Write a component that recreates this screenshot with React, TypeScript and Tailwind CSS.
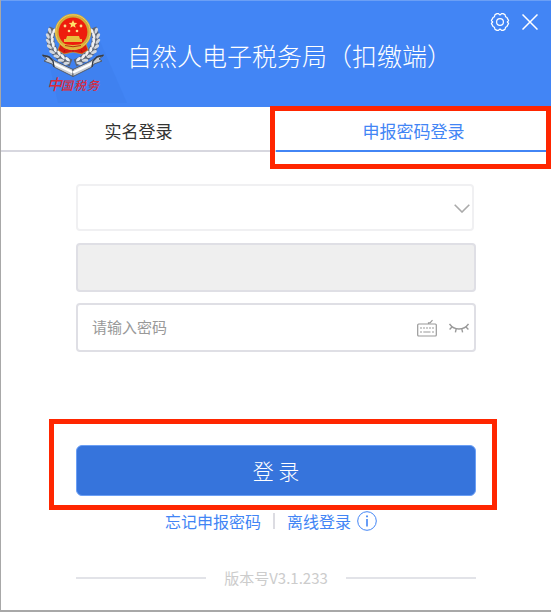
import React, { useState } from 'react';

const leaves = [
  [52, 29, 5], [50, 34, -4], [50, 39, -14], [51, 44, -26], [53, 49, -38], [57, 53, -50], [61, 57, -62], [66, 60, -74],
];

function Emblem() {
  return (
    <svg viewBox="40 8 88 96" className="h-24 w-[88px] shrink-0" role="img" aria-label="中国税务">
      <path d="M50 66 L58 102 L127 102 L99 38 Z" fill="#3f81f0" />
      {/* wreath, drawn once and mirrored */}
      {[false, true].map(flip => (
        <g key={String(flip)} transform={flip ? 'translate(146 0) scale(-1 1)' : undefined}>
          <path d="M53 27 C47 40 51 54 71 62" fill="none" stroke="#5b6576" strokeWidth="7.5" />
          {leaves.map(([x, y, r]) => (
            <g key={y} transform={`translate(${x} ${y}) rotate(${r})`}>
              <ellipse cx="-2.2" cy="0" rx="1.6" ry="3.2" fill="#d3d7dd" transform="rotate(-28)" />
              <ellipse cx="2.2" cy="0" rx="1.5" ry="3" fill="#f0f1f4" transform="rotate(28)" />
              <path d="M0 -2 V3" stroke="#5f6671" strokeWidth="0.8" />
            </g>
          ))}
          <path d="M42 54 L48 55 L55 60 L73 68.5 V75.5 L54 66 L52 63 L44 60 L47 58 Z" fill="#c9ced5" stroke="#4d535e" strokeWidth="0.9" />
          <path d="M53 62 L73 71.5" stroke="#ffffff" strokeWidth="2" />
          <path d="M43 54.5 L49 56 L53 60 L54 66" fill="none" stroke="#343b48" strokeWidth="1.4" />
        </g>
      ))}
      <path d="M60 43 H86 L88 49 L82 53 L73 51 L64 53 L58 49 Z" fill="#d91c12" stroke="#c9992a" strokeWidth="0.8" />
      <circle cx="73" cy="31" r="16.3" fill="#ee1c0d" stroke="#d4aa38" strokeWidth="3.8" />
      <circle cx="73" cy="31" r="17.2" fill="none" stroke="#edcf68" strokeWidth="0.9" />
      <path d="M73 19 l1.2 2.8 3 .2 -2.3 1.9 .8 2.9 -2.7 -1.6 -2.7 1.6 .8 -2.9 -2.3 -1.9 3 -.2 Z" fill="#ffe36a" />
      <g fill="#ffdc8a">
        <circle cx="65" cy="25" r="1.4" />
        <circle cx="81" cy="25" r="1.4" />
        <circle cx="69" cy="30" r="1.3" />
        <circle cx="77" cy="30" r="1.3" />
      </g>
      <path d="M67 35 H79 L80 38 H82 V41 H64 V38 H66 Z" fill="#e8bd3d" />
      <path d="M61 42 Q73 46 85 42 L82 47 Q73 50 64 47 Z" fill="#e2b43a" />
      <path d="M65 44.5 Q73 47 81 44.5" fill="none" stroke="#b52f12" strokeWidth="1" />
      <path d="M65 49 L64 51 M81 49 L82 51 M73 49 V51" stroke="#a51710" strokeWidth="1" />
      <text y="89" fill="#d92a3c" fontFamily="'Noto Sans CJK SC', sans-serif" fontStyle="italic" fontWeight="500">
        <tspan x="47" fontSize="15">中</tspan>
        <tspan x="61" fontSize="12">国</tspan>
        <tspan x="74" fontSize="12">税</tspan>
        <tspan x="87" fontSize="12">务</tspan>
      </text>
    </svg>
  );
}

function SettingsIcon() {
  return (
    <svg viewBox="0 0 20 20" className="size-5" fill="none" stroke="currentColor" strokeWidth="1.2" strokeLinejoin="round">
      <path d="M7 1.6 H8.2 L10 2.9 L11.8 1.6 H13 L15 2.6 L15.6 4.8 L17 5.6 L18.6 8.6 L17.3 10 L18.6 11.4 L17 14.4 L15.6 15.2 L15 17.4 L13 18.4 H11.8 L10 17.1 L8.2 18.4 H7 L5 17.4 L4.4 15.2 L3 14.4 L1.4 11.4 L2.7 10 L1.4 8.6 L3 5.6 L4.4 4.8 L5 2.6 Z" />
      <circle cx="10" cy="10" r="3.4" />
    </svg>
  );
}

function CloseIcon() {
  return (
    <svg viewBox="0 0 16 16" className="size-4" fill="none" stroke="currentColor" strokeWidth="1.5">
      <path d="M0.5 0.5 L15.5 15.5 M15.5 0.5 L0.5 15.5" />
    </svg>
  );
}

function KeyboardIcon() {
  return (
    <svg viewBox="0 0 20 18" className="h-[18px] w-5" fill="none" stroke="currentColor" strokeWidth="1.2">
      <rect x="0.7" y="5" width="18.6" height="12" rx="1" />
      <path d="M11.5 5 V3.8 H13 L15.5 1.2" />
      <path d="M3 9 H17" strokeDasharray="2 1" />
      <path d="M3 13 H5 M6.3 13 H13.5 M15 13 H17" />
    </svg>
  );
}

function ClosedEyeIcon() {
  return (
    <svg viewBox="0 0 20 10" className="h-2.5 w-5" fill="none" stroke="currentColor" strokeWidth="1.4">
      <path d="M0.5 1 Q4 6 10 6 Q16 6 19.5 1" />
      <path d="M3.2 3.8 L0.6 6.4 M7.2 5.8 L6.4 9.4 M12.8 5.8 L13.6 9.4 M16.8 3.8 L19.4 6.4" />
    </svg>
  );
}

export default function App() {
  const [tab, setTab] = useState('password');
  const [password, setPassword] = useState('');
  const [showPassword, setShowPassword] = useState(false);

  const tabClass = (name: string) =>
    tab === name ? 'border-[#4285f5] text-[#4285f5]' : 'border-[#d7d7df] text-[#333333]';

  return (
    <main className="flex min-h-screen flex-col border-b-2 border-l border-[#a8a8a8] bg-white font-['Noto_Sans_CJK_SC',sans-serif]">
      <header className="flex h-[107px] items-start border-t border-[#6b9ff5] bg-[#4285f5] pl-[39px] text-white">
        <div className="flex pt-2">
          <Emblem />
        </div>
        <h1 className="-ml-px flex-1 pt-9 text-[25px] leading-9 font-light whitespace-nowrap">自然人电子税务局（扣缴端）</h1>
        <div className="flex items-center gap-3 pt-[11px] pr-[13px]">
          <button type="button" aria-label="设置"><SettingsIcon /></button>
          <button type="button" aria-label="关闭"><CloseIcon /></button>
        </div>
      </header>

      <div role="tablist" className="grid grid-cols-2 text-[17px] leading-6">
        <button type="button" role="tab" aria-selected={tab === 'realname'} onClick={() => setTab('realname')} className={`h-[45px] border-b-2 pt-1 ${tabClass('realname')}`}>
          实名登录
        </button>
        <div className="relative">
          <button type="button" role="tab" aria-selected={tab === 'password'} onClick={() => setTab('password')} className={`h-[45px] w-full border-b-2 pt-1 ${tabClass('password')}`}>
            申报密码登录
          </button>
          <div className="pointer-events-none absolute -top-px right-0 -bottom-[17px] -left-1.5 border-5 border-[#ff2600]" />
        </div>
      </div>

      <form onSubmit={e => e.preventDefault()} className="flex flex-col px-[75px] pt-8">
        <div className="relative mr-0.5">
          <select aria-label="企业名称" className="h-[47px] w-full appearance-none rounded border-2 border-[#f0f0f2] bg-white px-4 outline-none">
            <option value=""></option>
          </select>
          <svg viewBox="0 0 16 9" className="pointer-events-none absolute top-5 right-1 h-[9px] w-4" fill="none" stroke="#aaaaaa" strokeWidth="1.6">
            <path d="M0.7 0.7 L8 8 L15.3 0.7" />
          </svg>
        </div>
        <input type="text" aria-label="纳税人识别号" disabled className="mt-3 h-[49px] rounded border-2 border-[#dfdfe5] bg-[#efefef] px-4" />
        <div className="mt-[11px] flex h-[49px] items-center gap-3 rounded border-2 border-[#dfdfe5] pr-[5px] pl-3.5 text-[#999999]">
          <input
            type={showPassword ? 'text' : 'password'}
            aria-label="密码"
            value={password}
            onChange={e => setPassword(e.target.value)}
            placeholder="请输入密码"
            className="min-w-0 flex-1 text-[15px] text-[#333333] outline-none placeholder:text-[#999999]"
          />
          <button type="button" aria-label="软键盘"><KeyboardIcon /></button>
          <button type="button" aria-label="显示密码" onClick={() => setShowPassword(!showPassword)}><ClosedEyeIcon /></button>
        </div>

        <div className="relative mt-[93px]">
          <button type="submit" className="h-[51px] w-full rounded-md border border-[#6b9ff5] bg-[#3674dc] text-[21px] font-light text-white">
            登 录
          </button>
          <div className="pointer-events-none absolute -top-[26px] -right-[21px] -bottom-3.5 -left-[27px] border-5 border-[#ff2600]" />
        </div>
      </form>

      <div className="mt-[13px] flex items-center justify-center pr-2.5 text-base leading-6 text-[#4285f5]">
        <a href="#forgot">忘记申报密码</a>
        <span className="mx-3 h-4 w-0.5 bg-[#dcdce2]" />
        <a href="#offline">离线登录</a>
        <button type="button" aria-label="说明" className="ml-1.5">
          <svg viewBox="0 0 20 20" className="size-5" fill="none" stroke="currentColor" strokeWidth="1">
            <circle cx="10" cy="10" r="9.3" />
            <path d="M10 8 V15.5" strokeWidth="1.6" />
            <path d="M10 4.5 V6.2" strokeWidth="1.8" />
          </svg>
        </button>
      </div>

      <footer className="mt-auto flex items-center px-[75px] pb-5 text-[15px] leading-6 text-[#cccccc]">
        <span className="h-0.5 flex-1 bg-[#e2e3e8]" />
        <span className="px-[18px]">版本号V3.1.233</span>
        <span className="h-0.5 flex-1 bg-[#e2e3e8]" />
      </footer>
    </main>
  );
}
